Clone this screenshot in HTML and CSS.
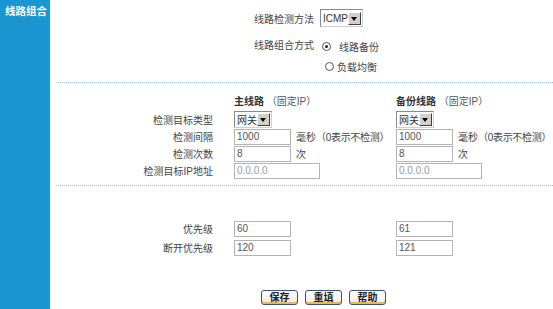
FILE: index.html
```html
<!DOCTYPE html>
<html lang="zh-CN">
<head>
    <meta charset="UTF-8">
    <title>线路组合</title>
    <link rel="stylesheet" href="styles.css">
</head>
<body>
    <div class="page">
        <aside class="side">
            <h1>线路组合</h1>
        </aside>

        <main class="main">
            <div class="detect">
                <span class="lbl">线路检测方法</span>
                <span class="select sel-icmp">ICMP<i class="arrow"></i></span>

                <span class="lbl lbl-mode">线路组合方式</span>
                <div class="radios">
                    <label class="radio"><span class="dot on"></span>线路备份</label>
                    <label class="radio radio-2"><span class="dot"></span>负载均衡</label>
                </div>
            </div>

            <div class="sep"></div>

            <div class="lines">
                <span></span>
                <span class="head"><b>主线路</b> （固定IP）</span>
                <span class="head"><b>备份线路</b> （固定IP）</span>

                <span class="lbl">检测目标类型</span>
                <span><span class="select sel-gw">网关<i class="arrow"></i></span></span>
                <span><span class="select sel-gw">网关<i class="arrow"></i></span></span>

                <span class="lbl">检测间隔</span>
                <span class="cell"><input class="txt short" value="1000">毫秒<span class="note">（0表示不检测）</span></span>
                <span class="cell"><input class="txt short" value="1000">毫秒<span class="note">（0表示不检测）</span></span>

                <span class="lbl">检测次数</span>
                <span class="cell"><input class="txt short" value="8">次</span>
                <span class="cell"><input class="txt short" value="8">次</span>

                <span class="lbl">检测目标IP地址</span>
                <span class="cell"><input class="txt long off" value="0.0.0.0"></span>
                <span class="cell"><input class="txt long off" value="0.0.0.0"></span>
            </div>

            <div class="sep"></div>

            <div class="lines prio">
                <span class="lbl">优先级</span>
                <span class="cell"><input class="txt short" value="60"></span>
                <span class="cell"><input class="txt short" value="61"></span>

                <span class="lbl">断开优先级</span>
                <span class="cell"><input class="txt short" value="120"></span>
                <span class="cell"><input class="txt short" value="121"></span>
            </div>

            <div class="actions">
                <button class="btn">保存</button>
                <button class="btn">重填</button>
                <button class="btn">帮助</button>
            </div>
        </main>
    </div>
</body>
</html>
```

FILE: styles.css
```css
body {
    margin: 0;
    font-family: "Liberation Sans", "Noto Sans CJK SC", sans-serif;
    font-size: 10px;
    color: #444;
    background: #fff;
}

.page {
    display: flex;
    height: 309px;
    overflow: hidden;
}

.side {
    width: 50px;
    flex: none;
    background-color: #1b96d0;
}

.side h1 {
    margin: 0;
    padding: 4px 0 0 5px;
    font-size: 10.5px;
    line-height: 14px;
    color: #fff;
    font-weight: bold;
    white-space: nowrap;
}

.main {
    flex: 1;
    min-width: 0;
}

.lbl {
    text-align: right;
    white-space: nowrap;
}

/* top: detection method / combine mode */
.detect {
    display: grid;
    grid-template-columns: 264px auto;
    column-gap: 6px;
    align-items: center;
    padding-top: 9px;
}

.lbl-mode {
    align-self: start;
    margin-top: 9px;
    line-height: 20px;
}

.radios {
    margin-top: 9px;
}

.radio {
    display: flex;
    align-items: center;
    height: 20px;
    gap: 8px;
    padding-left: 2px;
}

.radio-2 {
    padding-left: 5px;
    gap: 3px;
}

.dot {
    width: 7px;
    height: 7px;
    border: 1px solid #555;
    border-radius: 50%;
    background: #fff;
    position: relative;
}

.dot.on::after {
    content: "";
    position: absolute;
    left: 2px;
    top: 2px;
    width: 3px;
    height: 3px;
    border-radius: 50%;
    background: #222;
}

.select {
    display: inline-flex;
    align-items: center;
    justify-content: space-between;
    box-sizing: border-box;
    border: 1px solid;
    border-color: #8a8a8a #d0d0d0 #d0d0d0 #8a8a8a;
    background: #fff;
    padding: 0 1px 0 2px;
    color: #333;
    white-space: nowrap;
}

.sel-icmp {
    width: 43px;
    height: 18px;
}

.sel-gw {
    width: 38px;
    height: 17px;
}

.arrow {
    flex: none;
    width: 11px;
    height: 11px;
    background: #d4d0c8;
    border: 1px solid;
    border-color: #fff #404040 #404040 #fff;
    position: relative;
}

.arrow::after {
    content: "";
    position: absolute;
    left: 2px;
    top: 4px;
    border-left: 3.5px solid transparent;
    border-right: 3.5px solid transparent;
    border-top: 4px solid #000;
}

.sep {
    margin: 6px 0 0 6px;
    border-top: 1px dotted #93c6dc;
}

/* main / backup line columns */
.lines {
    display: grid;
    grid-template-columns: 184px 162px 1fr;
    grid-template-rows: 17px 18px 17px 17px 17px;
    align-items: center;
    margin-top: 10px;
}

.lines .lbl {
    margin-right: 21px;
}

.head {
    white-space: nowrap;
    color: #555;
    margin-bottom: 3px;
    text-spacing-trim: space-all;
}

.head b {
    color: #333;
}

.cell {
    display: flex;
    align-items: center;
    gap: 5px;
    white-space: nowrap;
}

.note {
    margin-left: -5px;
    letter-spacing: -0.3px;
    text-spacing-trim: space-all;
}

.txt {
    box-sizing: border-box;
    height: 16px;
    border: 1px solid #b4b4b4;
    padding: 0 2px;
    font: inherit;
    font-size: 10px;
    color: #555;
    background: #fff;
    outline: none;
}

.short {
    width: 57px;
}

.long {
    width: 86px;
}

.off {
    color: #999;
}

.lines.prio {
    grid-template-rows: 19px 19px;
    margin-top: 33px;
}

.actions {
    display: flex;
    gap: 7px;
    padding-left: 211px;
    margin-top: 33px;
}

.btn {
    width: 37px;
    height: 15px;
    padding: 0;
    font: inherit;
    font-size: 10px;
    font-weight: 600;
    color: #222;
    border: 1px solid #3b5570;
    border-radius: 3px;
    background: linear-gradient(#ffffff, #ecebe6);
    box-shadow: inset 0 -2px 0 #f2b64a;
    line-height: 12px;
}
```
